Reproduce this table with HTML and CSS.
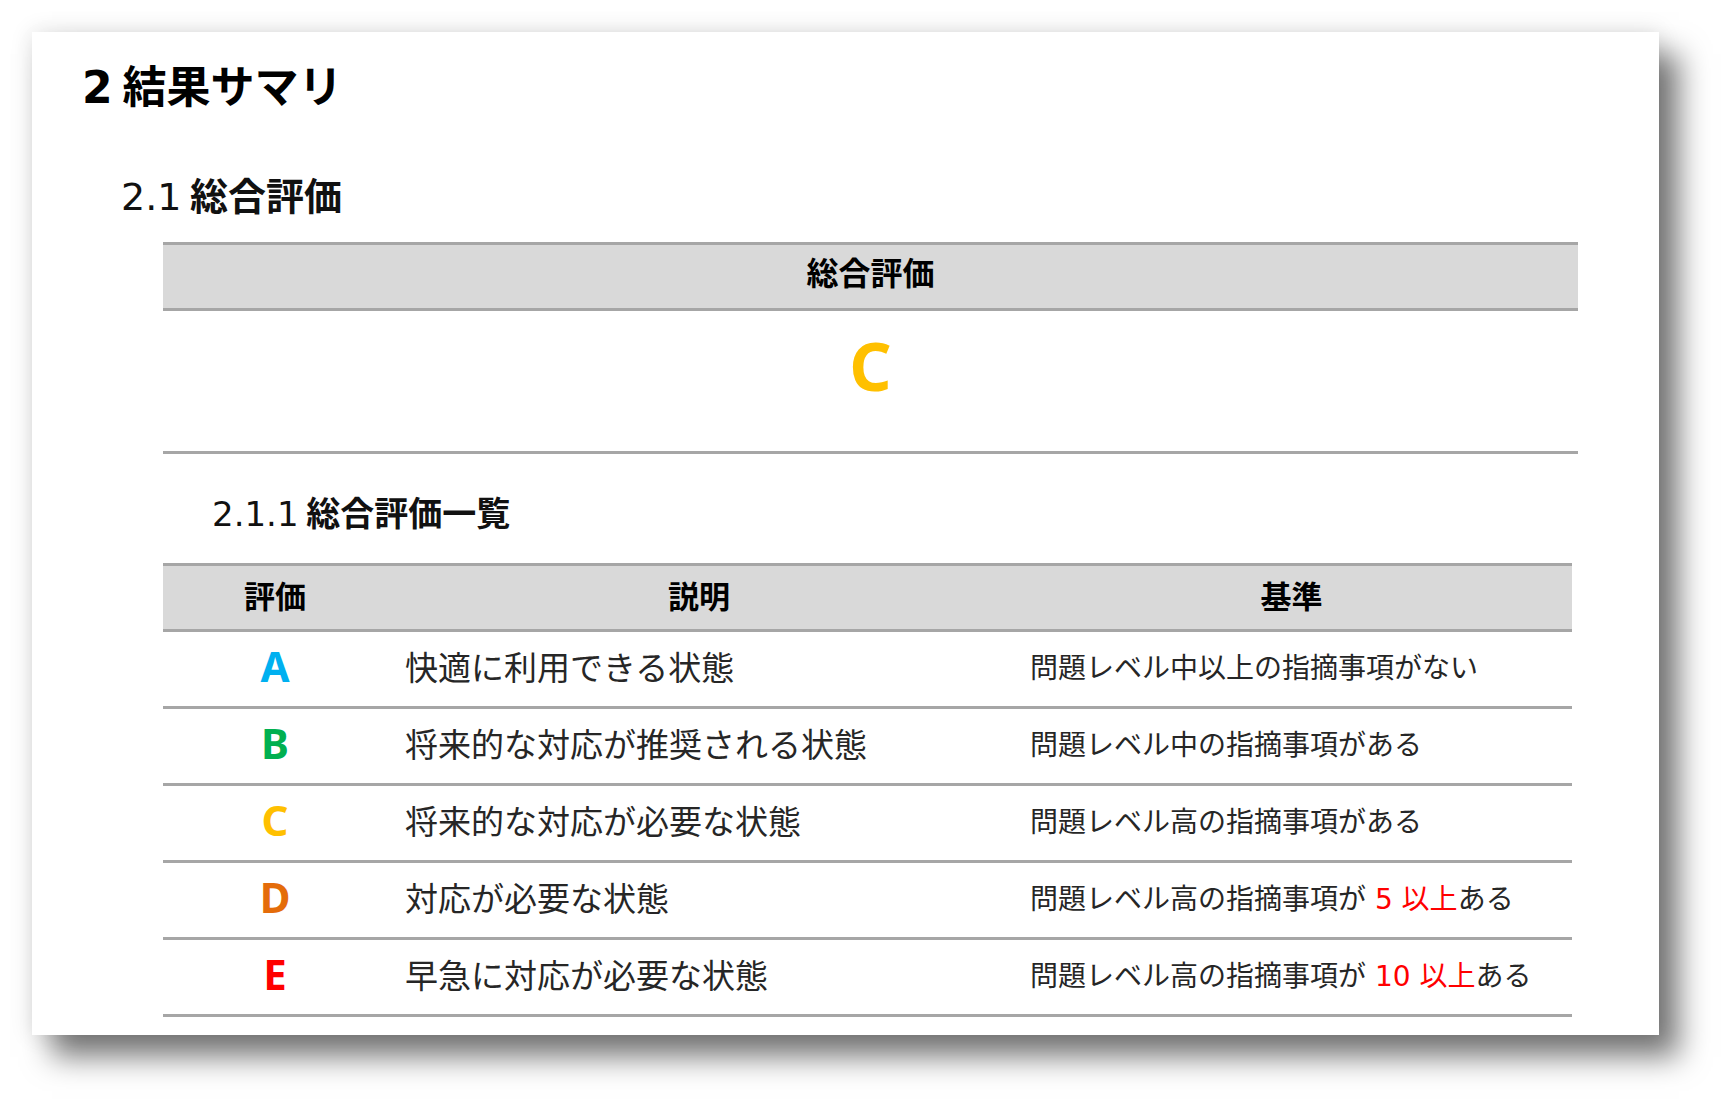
FILE: index.html
```html
<!DOCTYPE html>
<html lang="ja">
<head>
<meta charset="utf-8">
<title>結果サマリ</title>
<link rel="stylesheet" href="styles.css">
</head>
<body>
<div class="page">
  <div class="card">
    <h1 class="h1"><span class="num">2</span> 結果サマリ</h1>
    <h2 class="h2"><span class="num light">2.1</span> 総合評価</h2>

    <div class="summary">
      <div class="summary-head"><span class="head-text">総合評価</span></div>
      <div class="summary-body"><span class="grade-big">C</span></div>
    </div>

    <h3 class="h3"><span class="num light">2.1.1</span> 総合評価一覧</h3>

    <div class="list">
      <div class="list-row list-head">
        <div class="c1">評価</div>
        <div class="c2 center">説明</div>
        <div class="c3 center">基準</div>
      </div>
      <div class="list-row">
        <div class="c1 grade ga">A</div>
        <div class="c2 desc">快適に利用できる状態</div>
        <div class="c3 crit">問題レベル中以上の指摘事項がない</div>
      </div>
      <div class="list-row">
        <div class="c1 grade gb">B</div>
        <div class="c2 desc">将来的な対応が推奨される状態</div>
        <div class="c3 crit">問題レベル中の指摘事項がある</div>
      </div>
      <div class="list-row">
        <div class="c1 grade gc">C</div>
        <div class="c2 desc">将来的な対応が必要な状態</div>
        <div class="c3 crit">問題レベル高の指摘事項がある</div>
      </div>
      <div class="list-row">
        <div class="c1 grade gd">D</div>
        <div class="c2 desc">対応が必要な状態</div>
        <div class="c3 crit">問題レベル高の指摘事項が <span class="red">5 以上</span>ある</div>
      </div>
      <div class="list-row">
        <div class="c1 grade ge">E</div>
        <div class="c2 desc">早急に対応が必要な状態</div>
        <div class="c3 crit">問題レベル高の指摘事項が <span class="red">10 以上</span>ある</div>
      </div>
    </div>
  </div>
</div>
</body>
</html>
```

FILE: styles.css
```css
html, body {
  margin: 0;
  padding: 0;
  background: #ffffff;
}

.page {
  box-sizing: border-box;
  min-height: 1101px;
  padding: 32px 0 0 32px;
}

.card {
  width: 1627px;
  height: 1003px;
  box-sizing: border-box;
  background: #ffffff;
  padding-top: 27px;
  box-shadow: 0 0 22px rgba(0, 0, 0, 0.12), 20px 22px 28px rgba(0, 0, 0, 0.52);
  font-family: "Noto Sans CJK JP", "Noto Sans", sans-serif;
  color: #111;
}

.num {
  font-family: "DejaVu Sans", "Noto Sans CJK JP", sans-serif;
}

.light {
  font-weight: 400;
}

.h1 {
  margin: 0 0 0 50px;
  font-size: 44px;
  line-height: 50px;
  font-weight: 700;
  color: #000;
}

.h2 {
  margin: 59px 0 0 89px;
  font-size: 38px;
  line-height: 43px;
  font-weight: 700;
  color: #111;
}

.h3 {
  margin: 39px 0 0 180px;
  font-size: 34px;
  line-height: 38px;
  font-weight: 700;
  color: #111;
}

/* summary table */
.summary {
  margin: 23px 0 0 131px;
  width: 1415px;
}

.summary-head {
  height: 63px;
  box-sizing: content-box;
  border-top: 3px solid #a6a6a6;
  border-bottom: 3px solid #a6a6a6;
  background: #d9d9d9;
  display: flex;
  align-items: center;
  justify-content: center;
  font-size: 32px;
  font-weight: 700;
  color: #000;
}

.head-text {
  margin-bottom: 12px;
}

.summary-body {
  height: 143px;
  box-sizing: border-box;
  padding-top: 9px;
  border-bottom: 3px solid #a6a6a6;
  text-align: center;
}

.grade-big {
  font-family: "Noto Sans", sans-serif;
  font-weight: 700;
  font-size: 66px;
  line-height: 90px;
  color: #ffc000;
}

/* list table */
.list {
  margin: 30px 0 0 131px;
  width: 1409px;
}

.list-row {
  display: grid;
  grid-template-columns: 224px 624px 561px;
  align-items: center;
  height: 74px;
  border-bottom: 3px solid #a6a6a6;
}

.list-row > div {
  margin-bottom: 6px;
}

.list-head {
  height: 63px;
  border-top: 3px solid #a6a6a6;
  background: #d9d9d9;
  font-size: 31px;
  font-weight: 700;
  color: #000;
}

.c1 {
  text-align: center;
}

.center {
  text-align: center;
}

.desc {
  padding-left: 18px;
  font-size: 33px;
  color: #262626;
}

.crit {
  padding-left: 19px;
  font-size: 28px;
  color: #262626;
  font-family: "DejaVu Sans", "Noto Sans CJK JP", sans-serif;
}

.grade {
  font-family: "Noto Sans", sans-serif;
  font-weight: 700;
  font-size: 42px;
  line-height: 1;
}

.ga { color: #00b0f0; }
.gb { color: #00b050; }
.gc { color: #ffc000; }
.gd { color: #e46c0a; }
.ge { color: #ff0000; }

.red {
  color: #ff0000;
}
```
